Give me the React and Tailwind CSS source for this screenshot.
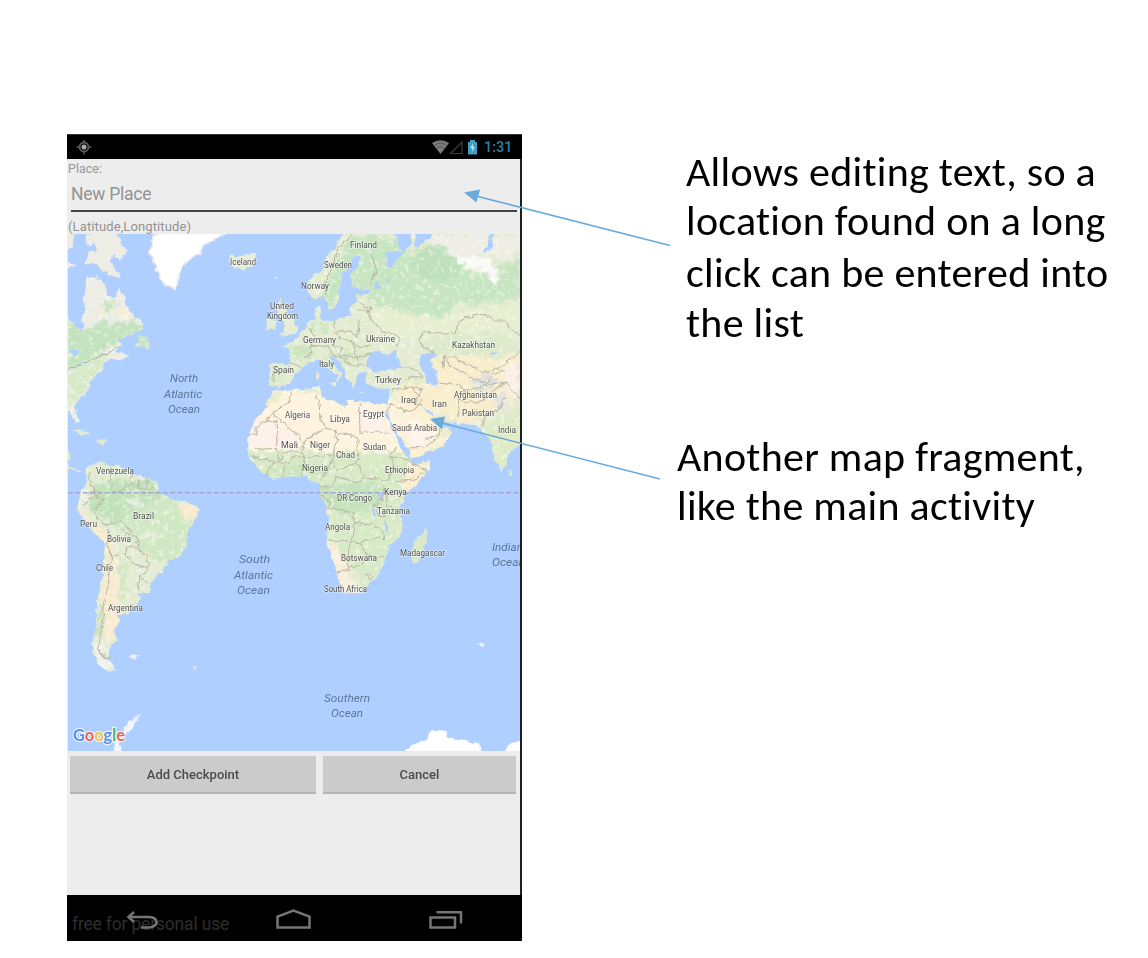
const COUNTRIES = [
  ["Iceland", 230, 265, 26], ["Finland", 350, 248, 27], ["Sweden", 324, 268, 28], ["Norway", 301, 289, 28],
  ["United", 270, 309, 24], ["Kingdom", 267, 319, 31], ["Germany", 303, 343, 33], ["Ukraine", 366, 342, 29],
  ["Spain", 273, 373, 21], ["Italy", 319, 367, 15], ["Kazakhstan", 452, 348, 43], ["Turkey", 375, 383, 26],
  ["Afghanistan", 454, 398, 43], ["Iraq", 401, 403, 15], ["Iran", 432, 407, 15], ["Pakistan", 462, 416, 32],
  ["India", 498, 433, 18], ["Saudi Arabia", 392, 431, 45], ["Algeria", 285, 418, 25], ["Libya", 330, 422, 20],
  ["Egypt", 363, 417, 21], ["Mali", 281, 448, 17], ["Niger", 310, 448, 20], ["Sudan", 363, 450, 23],
  ["Chad", 336, 458, 19], ["Nigeria", 302, 471, 26], ["Ethiopia", 385, 473, 29], ["Kenya", 384, 495, 23],
  ["DR Congo", 337, 501, 35], ["Tanzania", 377, 514, 33], ["Angola", 325, 530, 25], ["Botswana", 341, 561, 36],
  ["Madagascar", 400, 556, 45], ["South Africa", 324, 592, 43], ["Venezuela", 96, 474, 38], ["Brazil", 133, 519, 21],
  ["Peru", 80, 527, 17], ["Bolivia", 107, 542, 24], ["Chile", 96, 571, 17], ["Argentina", 108, 611, 35],
];

const OCEANS = [
  ["North", 170, 382, 28], ["Atlantic", 164, 398, 38], ["Ocean", 168, 413, 32],
  ["South", 239, 563, 31], ["Atlantic", 234, 579, 39], ["Ocean", 237, 594, 33],
  ["Southern", 324, 702, 46], ["Ocean", 331, 717, 32], ["Indian", 492, 551, 31], ["Ocean", 492, 566, 33],
];

const NORTH_AMERICA =
  "M75 140L110 140L135 165L140 195L160 205L178 178L195 205L205 240L225 260L250 280L248 300L200 320L170 330L185 340L165 365L200 375L212 370L180 392L150 385L130 400L130 420L90 450L85 480L50 515L42 530L55 570L45 575L35 550L20 535L20 258L40 280L60 305L72 290L65 265L75 240L70 215L75 190Z M240 315L260 325L275 355L228 350L235 330Z";
const ARCTIC =
  "M75 8L170 8L185 40L205 60L180 92L160 75L150 95L175 125L178 147L130 125L110 105L75 100L85 75L100 60L80 40Z M20 8L45 8L35 50L20 60Z M20 90L50 110L20 115Z";
const GREENLAND =
  "M290 8L495 8L470 25L430 45L420 70L385 90L370 110L355 130L350 180L310 160L290 120L280 90L270 70L275 30Z";
const CARIBBEAN = "M28 599L70 602L98 620L60 610Z M110 626L145 632L120 642Z M20 655L35 690L20 690Z";
const SOUTH_AMERICA =
  "M20 72L50 90L70 100L85 75L120 65L180 80L215 95L240 110L285 120L300 160L340 180L385 185L415 205L415 230L385 270L380 310L365 345L320 365L305 395L275 430L265 460L235 455L245 480L205 520L175 525L180 545L160 565L170 600L150 620L145 655L165 690L145 695L110 665L95 620L105 570L110 490L125 420L135 310L90 270L65 230L50 200L60 160L80 130L80 100L50 95L20 85Z";
const AFRICA =
  "M25 205L25 165L50 115L85 80L80 60L100 32L160 32L240 18L245 50L285 70L320 82L325 60L355 65L440 75L438 110L470 180L490 220L510 240L520 255L570 243L570 265L530 315L495 345L480 380L485 440L480 470L445 500L435 540L420 575L390 612L365 640L310 640L300 610L285 560L260 490L265 440L262 380L240 345L240 310L210 300L190 285L150 290L95 300L60 270L30 240Z";
const EURASIA =
  "M355 6L330 50L300 90L290 120L255 145L248 170L255 200L275 205L290 190L305 215L310 240L330 235L340 205L345 180L350 130L375 100L385 75L410 85L400 110L380 130L380 165L400 178L440 180L425 195L395 195L400 215L380 225L375 255L340 268L300 270L285 265L290 230L275 230L272 265L250 280L230 310L205 335L170 345L195 360L200 402L135 400L135 465L165 472L195 462L215 430L250 400L285 390L320 425L340 435L335 462L346 447L352 432L325 405L310 375L330 380L360 420L375 460L390 470L395 440L410 425L425 430L425 465L470 475L497 475L485 540L485 545L500 580L520 615L550 655L555 685L575 682L650 650L685 605L650 585L620 560L595 532L610 538L635 570L685 580L745 585L770 600L795 630L810 690L830 722L845 700L850 670L892 640L892 6Z";
const ISLANDS =
  "M165 205L180 225L190 255L217 290L215 310L165 318L180 300L175 275L160 250L155 220Z M125 265L155 270L150 295L125 303Z M15 70L35 80L90 68L95 95L55 122L25 110L15 95Z M273 425L284 425L282 447L273 447Z M310 458L335 458L330 470Z M402 485L418 487L404 490Z";
const SEAS =
  "M425 400L435 370L450 360L485 375L515 360L510 385L540 410L495 420L450 425L435 420Z M590 375L625 362L632 375L615 395L630 420L640 445L635 470L605 460L600 430L585 400Z M505 6L555 6L560 40L540 60L530 75L500 110L485 110L490 85L470 70L500 65L530 65L515 30Z M572 6L628 6L615 28L590 38L580 50L570 50Z M795 10L805 10L800 60L770 66L788 45Z M450 155L465 160L465 180L450 180Z M482 140L496 155L490 165Z M795 370L820 365L805 376Z";

const BORDERS_EURASIA =
  "M385 12L370 25L340 50L325 110L305 140L300 190M440 70L455 120L435 165M395 240L430 240L435 265L460 290L470 305L510 310L525 325L515 350M400 215L440 240M325 270L330 310L370 300L395 320L400 270M330 310L350 325L380 335L400 350L440 345M250 290L270 320L255 345L260 370L235 385M255 345L310 350L350 350L345 380L385 410M310 350L330 380L360 375L375 405L430 405M360 375L400 385L440 370M200 402L230 412M145 420L148 460M385 345L400 400M600 355L580 330L600 302L650 312L690 310L700 275L765 250L805 270L840 270L860 300L890 315M600 355L625 365M655 415L655 380L690 385L745 410L775 430L830 410L890 360M655 380L680 410L720 430L750 450L790 460L800 430L840 420M540 410L580 420L590 440L560 440L540 450M500 480L560 470L590 480L570 520L595 532M560 470L590 510L570 540L540 545L500 520L485 545M640 460L700 465L720 480L700 510L705 560M720 480L790 465L840 455M700 510L760 520L800 490L840 455L870 490L890 510M770 590L780 560L820 540L840 500M550 655L600 650L645 620L650 585M600 630L645 610";
const BORDERS_AFRICA =
  "M25 165L48 165L48 140L80 120L108 125L112 205L60 208L40 200M80 120L95 100L195 185L245 150L262 145L355 175M95 100L150 60L150 35M262 145L240 120L238 80L232 50M358 70L360 157L440 157M355 175L350 210L360 240L340 250L290 275L275 240L290 180L285 150M195 185L185 215L145 215L115 240L112 205M185 215L190 235L275 225M30 225L60 235L110 245L145 250L165 225L195 240L185 285M80 290L90 260L110 245M130 290L130 260M275 240L260 275L240 300M240 320L280 320L285 290L345 305L375 295L440 300L465 260L450 230L470 200M345 250L375 290M450 230L490 235L560 270L520 300L465 305M260 385L310 390L340 400L340 430L400 435L430 450L430 480M262 480L360 488L400 480L420 470M340 430L340 480L325 500L325 570L290 580M325 560L360 560L385 530L430 530M360 488L390 530M440 330L440 380L490 390M400 370L420 410L440 410M435 320L425 350L410 380M240 345L260 355L270 380M378 585L390 580L396 590L386 598Z";
const BORDERS_SOUTH_AMERICA =
  "M90 100L90 130L105 150L100 170L65 195M155 80L150 120L160 160L185 150L210 130L215 100M210 130L230 145L280 145M235 115L235 145M262 118L260 145M100 165L135 180L105 205L110 235L140 255L180 245L215 275M140 255L150 290L140 310L155 345L190 340L205 320L235 325L230 290L180 270M155 345L150 400L135 480L125 560L115 640L150 655M200 320L195 345L240 385L265 375L260 350L235 325M265 375L240 410L270 430M240 410L232 450";

function LandTexture() {
  return (
    <g filter="url(#soft)">
      {/* North America */}
      <path fill="#c3e3bf" d="M68 318L82 328L100 322L140 322L142 330L112 345L90 362L68 372Z" />
      <path fill="#d6eac8" d="M68 372L100 352L108 360L84 392L68 410Z" />
      <ellipse cx="111" cy="307" rx="8" ry="6" fill="#c8e4c0" />
      <ellipse cx="127" cy="315" rx="5" ry="4" fill="#f9eccb" />
      <ellipse cx="102" cy="314" rx="4" ry="3" fill="#f9eccb" />
      {/* Northern Europe and Russia */}
      <path fill="#c5e4c0" d="M345 245L352 234L362 242L350 270L345 300L328 308L326 285Z" />
      <path fill="#c8e5c1" d="M362 234L400 240L410 255L450 252L475 275L520 260L520 300L455 305L440 322L370 302L350 286Z" />
      <ellipse cx="437" cy="263" rx="25" ry="18" fill="#bee1bc" />
      <path fill="#eeeee6" d="M425 234L520 234L520 258L480 252L455 260Z" />
      <path fill="#fafaf8" d="M455 258L485 255L500 275L495 284L480 270L462 268Z" />
      <path fill="#e8eed0" d="M350 306L440 318L520 300L520 326L440 335L400 340Z" />
      {/* Western Europe */}
      <ellipse cx="300" cy="353" rx="15" ry="8" fill="#cce5bd" />
      <ellipse cx="320" cy="327" rx="10" ry="6" fill="#cfe6c0" />
      <ellipse cx="278" cy="377" rx="8" ry="8" fill="#dcebc7" />
      <ellipse cx="345" cy="357" rx="22" ry="6" fill="#d6e8c4" />
      {/* Central Asia, Middle East */}
      <ellipse cx="470" cy="347" rx="45" ry="14" fill="#dde9c9" />
      <path fill="#faedcb" d="M438 358L520 356L520 395L500 410L470 425L432 410L395 400L400 384L430 382Z" />
      <path fill="#fcefd2" d="M388 400L425 405L450 440L412 462L398 440Z" />
      <path fill="#fff3ea" d="M405 412L432 432L428 445L410 450Z" />
      <path fill="#fcefe8" d="M500 366L520 362L520 396L508 392Z" />
      <ellipse cx="484" cy="383" rx="12" ry="9" fill="#dededb" />
      <ellipse cx="500" cy="402" rx="9" ry="8" fill="#e3e3df" />
      <path fill="#deebc6" d="M486 430L505 412L520 410L520 450L500 472Z" />
      {/* Africa */}
      <path fill="#fff3dd" d="M244 447L256 408L272 390L320 385L400 405L404 452L244 454Z" />
      <path fill="#fdf0e8" d="M250 422L277 422L276 447L250 447Z" />
      <path fill="#fdf0e8" d="M361 408L385 410L386 432L361 432Z M278 425L302 442L298 450L278 450Z" />
      <path fill="#d8e9c6" d="M244 451L400 452L432 462L428 474L400 500L400 560L372 595L344 560L325 530L318 490L290 478L262 482Z" />
      <path fill="#c4e2bb" d="M318 484L375 482L385 505L345 515L322 500Z" />
      <ellipse cx="313" cy="470" rx="20" ry="6" fill="#c9e4bc" />
      <ellipse cx="283" cy="471" rx="16" ry="6" fill="#cde5bf" />
      <path fill="#fbeeda" d="M324 540L336 543L348 575L355 580L345 594L334 575Z" />
      <path fill="#fbeecd" d="M402 485L410 466L430 460L432 470L408 494Z" />
      <ellipse cx="272" cy="397" rx="7" ry="7" fill="#e4ebc9" />
      <ellipse cx="310" cy="391" rx="12" ry="3.5" fill="#e1ecc9" />
      {/* South America */}
      <path fill="#c0e1b9" d="M86 490L110 478L156 482L162 495L140 515L120 528L96 515L88 502Z" />
      <path fill="#cfe7c3" d="M120 515L175 495L190 520L183 552L160 562L130 540Z" />
      <ellipse cx="189" cy="509" rx="11" ry="9" fill="#f8ebcc" />
      <path fill="#f9ebd0" d="M76 508L90 520L112 535L115 560L122 590L118 635L106 640L98 630L106 560L104 540L85 525Z" />
      <ellipse cx="122" cy="580" rx="5" ry="20" fill="#d3e6c0" />
      <path fill="#f3f3ee" d="M92 645L100 640L108 662L112 670L98 664Z M78 495L84 480L88 485L80 510Z" />
      <ellipse cx="100" cy="620" rx="3" ry="15" fill="#c5e0bd" />
      <ellipse cx="135" cy="502" rx="9" ry="3" fill="#eaf2e4" />
      <ellipse cx="150" cy="535" rx="12" ry="3" fill="#e7f0dc" />
    </g>
  );
}

function WorldMap() {
  return (
    <svg viewBox="68 234 452 517" className="block h-[517px] w-[452px] bg-[#aecfff]" fontFamily="Roboto, sans-serif">
      <defs>
        <filter id="coast" x="-5%" y="-5%" width="110%" height="110%" colorInterpolationFilters="sRGB">
          <feTurbulence type="fractalNoise" baseFrequency="0.16" numOctaves="2" seed="4" result="n" />
          <feDisplacementMap in="SourceGraphic" in2="n" scale="6" xChannelSelector="R" yChannelSelector="G" />
        </filter>
        <filter id="soft">
          <feGaussianBlur stdDeviation="1.6" result="b" />
          <feTurbulence type="fractalNoise" baseFrequency="0.13" numOctaves="3" seed="9" result="n" />
          <feDisplacementMap in="b" in2="n" scale="15" xChannelSelector="R" yChannelSelector="G" />
        </filter>
        <filter id="speckle" x="0" y="0" width="100%" height="100%">
          <feTurbulence type="fractalNoise" baseFrequency="0.2" numOctaves="3" seed="21" />
          <feColorMatrix values="0 0 0 0 .97  0 0 0 0 .97  0 0 0 0 .94  7 0 0 0 -3.9" />
        </filter>
        <clipPath id="land">
          <path transform="translate(60 230) scale(.33333)" d={NORTH_AMERICA} />
          <path transform="translate(60 440) scale(.33333)" d={SOUTH_AMERICA} />
          <path transform="translate(240 380) scale(.33333)" d={AFRICA} />
          <path transform="translate(225 230) scale(.33333)" d={EURASIA} />
        </clipPath>
      </defs>
      <g filter="url(#coast)">
        <g transform="translate(60 230) scale(.33333)">
          <path d={NORTH_AMERICA} fill="#edede5" />
          <path d="M240 315L260 325L275 355L228 350L235 330Z" fill="#c9e5c2" />
          <path d={ARCTIC} fill="#edede6" />
          <path d={GREENLAND} fill="#fff" stroke="#ececea" strokeWidth="5" />
          <path d={CARIBBEAN} fill="#e0ebd0" />
        </g>
        <path transform="translate(60 440) scale(.33333)" d={SOUTH_AMERICA} fill="#e3ecd2" />
        <path transform="translate(240 380) scale(.33333)" d={AFRICA} fill="#e6ecd0" />
        <g transform="translate(225 230) scale(.33333)">
          <path d={EURASIA} fill="#e3ebd0" />
          <path d={ISLANDS} fill="#e6edd6" />
        </g>
        <g clipPath="url(#land)">
          <LandTexture />
          <rect x="68" y="234" width="452" height="440" filter="url(#speckle)" opacity="0.45" />
        </g>
        <g transform="translate(370 380) scale(.33333)">
          <path d="M170 440L175 465L150 545L130 552L125 520L130 485L155 460Z" fill="#d8eac9" />
          <path d="M415 262L428 285L418 290Z" fill="#d8eac9" />
        </g>
        <g transform="translate(225 230) scale(.33333)" fill="#aecfff">
          <path d={SEAS} />
        </g>
        <g fill="#aecfff">
          <path d="M379 492L383 494L382 500L378 497Z M372 506L375 512L376 518L373 513Z M385 519L388 526L387 534L385 528Z" />
          <path d="M88 248L94 243L98 249L91 252Z M68 352L75 356L78 351L72 349Z" />
        </g>
        <g fill="none" stroke="#bab8a6" strokeWidth="3.2" strokeLinejoin="round">
          <path transform="translate(225 230) scale(.33333)" d={BORDERS_EURASIA} />
          <path transform="translate(240 380) scale(.33333)" d={BORDERS_AFRICA} />
          <path transform="translate(60 440) scale(.33333)" d={BORDERS_SOUTH_AMERICA} />
        </g>
        <path d="M70 368L82 365L94 358L108 354L118 346" fill="none" stroke="#a6b39f" strokeWidth="1" />
        <path d="M68 368L80 366L88 362" fill="none" stroke="#8fb2e6" strokeWidth="1.2" />
        <path transform="translate(290 680) scale(.33333)" fill="#fff" d="M335 219L380 190L410 180L420 155L465 150L470 175L570 190L576 222L335 222Z M640 219L660 190L700 180L700 222L640 222Z" />
        <path transform="translate(60 680) scale(.33333)" fill="#f3f6fa" d="M165 222L163 180L192 150L205 125L250 100L222 127L208 157L187 172L178 190L183 222Z" />
        <path fill="#e9eff5" d="M130 655L138 655L136 659L131 658Z M477 643L484 643L483 648L479 647Z M193 666L197 667L195 670Z M274 277L278 277L277 280Z" />
      </g>
      <path d="M68 492.700H520" stroke="#a7a3cb" strokeWidth="1.600" strokeDasharray="5 2.300" />
      <g fontSize="8.500" fill="#505050" stroke="#fff" strokeOpacity="0.500" strokeWidth="1.500" paintOrder="stroke" strokeLinejoin="round">
        {COUNTRIES.map(([name, x, y, w]) => (
          <text key={name} x={x} y={y} textLength={w} lengthAdjust="spacingAndGlyphs">{name}</text>
        ))}
      </g>
      <g fontSize="11.200" fontStyle="italic" fill="#5c7799">
        {OCEANS.map(([name, x, y, w]) => (
          <text key={name + y} x={x} y={y} textLength={w} lengthAdjust="spacingAndGlyphs">{name}</text>
        ))}
      </g>
      <text x="73" y="741" fontSize="17.500" textLength="52" lengthAdjust="spacingAndGlyphs" stroke="#fff" strokeOpacity="0.700" strokeWidth="2.500" paintOrder="stroke" strokeLinejoin="round" fontFamily="Lato, sans-serif" fontWeight="700">
        <tspan fill="#5b8def">G</tspan><tspan fill="#ee6055">o</tspan><tspan fill="#f8c13a">o</tspan><tspan fill="#5b8def">g</tspan><tspan fill="#4cb267">l</tspan><tspan fill="#ee6055">e</tspan>
      </text>
    </svg>
  );
}

function StatusBar() {
  return (
    <div className="flex h-[24px] shrink-0 items-center bg-black pl-[9px] pr-[9px]">
      <svg className="h-[16px] w-[16px]" viewBox="0 0 16 16" fill="none" stroke="#5c5c5c">
        <circle cx="8" cy="8" r="4.500" strokeWidth="1.900" />
        <circle cx="8" cy="8" r="2.500" fill="#aaa" stroke="none" />
        <path d="M8 1V4M8 12.500V15.500M.5 8H3.500M12.500 8H15.500" strokeWidth="1.500" />
      </svg>
      <svg className="ml-auto h-[18px] w-[48px]" viewBox="0 0 48 18">
        <path d="M1 5Q9.500 -.5 18 5L9.500 16Z" fill="#7c7c7c" />
        <path d="M4 7Q9.500 3 15 7M6 10Q9.500 7.500 13 10" fill="none" stroke="#555" />
        <path d="M19.500 15.500H31V4Z" fill="none" stroke="#3c3c3c" strokeWidth="1.200" />
        <path d="M37 4H39V2H44V4H46V16.500H37Z" fill="#3f9fc4" />
        <path d="M42 5L39.500 10H41.500L41 14L43.800 9H42Z" fill="#c9e8f4" />
      </svg>
      <span className="ml-[5px] w-[29px] text-[14.500px] font-medium leading-[25px] text-[#2582a6] [font-family:Roboto,sans-serif]">1:31</span>
    </div>
  );
}

function NavBar() {
  return (
    <div className="relative flex h-[46px] shrink-0 items-center bg-black pl-[5px]">
      <span className="whitespace-nowrap pt-[11px] text-[17.500px] leading-[24px] tracking-[-0.180px] text-[#2e2e2e] [font-family:Roboto,sans-serif]">free for personal use</span>
      <svg className="absolute left-0 top-0 h-[46px] w-[455px]" viewBox="67 895 455 46" fill="none" stroke="#757575" strokeWidth="2.500">
        <path d="M129 917H149Q156.500 917.500 156.500 922T149 927.500H141" />
        <path d="M134 912L128.500 917L134 922" />
        <path d="M277.500 927.500V916.500L293.500 910.500L309.500 916.500V927.500Z" />
        <path d="M430.500 917.500H455V927.500H430.500Z" />
        <path d="M436.500 912.200H461V923.500" />
      </svg>
    </div>
  );
}

function Phone() {
  return (
    <div className="flex h-[807px] w-[455px] shrink-0 flex-col border-t border-[#333] bg-[#1c1f22]">
      <StatusBar />
      <div className="mr-[2px] flex flex-1 flex-col bg-[#ededed] pl-px [font-family:Roboto,sans-serif]">
        <div className="h-[20px] pt-[3px] text-[12.500px] leading-[14px] text-[#989898]">Place:</div>
        <div className="mx-[3px] h-[33px] border-b-[2.500px] border-[#444] text-[17.500px] leading-[30px] tracking-[-0.250px] text-[#939393]">New Place</div>
        <div className="h-[22px] whitespace-nowrap pt-[7px] text-[13px] leading-[15px] tracking-[0.120px] text-[#939393]">(Latitude,Longtitude)</div>
        <WorldMap />
        <div className="flex gap-[7px] pb-px pl-[2px] pr-[4px] pt-[5px] text-[13px] font-medium text-[#4c4c4c]">
          <button className="h-[38px] w-[246px] border-b-2 border-[#b4b4b4] bg-[#cbcbcb] pt-[2px]">Add Checkpoint</button>
          <button className="h-[38px] w-[193px] border-b-2 border-[#b4b4b4] bg-[#cbcbcb] pt-[2px]">Cancel</button>
        </div>
      </div>
      <NavBar />
    </div>
  );
}

export default function App() {
  return (
    <main className="relative flex h-[958px] w-[1148px] overflow-hidden bg-white pl-[67px] pt-[134px]">
      <Phone />
      <section className="flex flex-col whitespace-nowrap pl-[155px] pt-[13px] text-[42px] leading-[50px] tracking-[0.270px] text-black [font-family:Carlito,Lato,sans-serif] [font-variant-ligatures:none]">
        <p className="pl-[9px]">
          <span className="block h-[49px]">Allows editing text, so a</span>
          <span className="block h-[52px]">location found on a long</span>
          <span className="block h-[50px]">click can be entered into</span>
          <span className="block h-[50px]">the list</span>
        </p>
        <p className="mt-[84px]">
          <span className="block h-[49px]">Another map fragment,</span>
          <span className="block h-[50px]">like the main activity</span>
        </p>
      </section>
      <svg className="pointer-events-none absolute left-0 top-0" width="1148" height="958" viewBox="0 0 1148 958" stroke="#6aaadb" strokeWidth="1.600" fill="#6aaadb">
        <path d="M670 245.500L476 196" fill="none" />
        <path d="M464 192.500L480 189.500L476.500 202.500Z" stroke="none" />
        <path d="M660 479L442 423" fill="none" />
        <path d="M430 419L445 416.500L442 429.500Z" stroke="none" />
      </svg>
    </main>
  );
}
